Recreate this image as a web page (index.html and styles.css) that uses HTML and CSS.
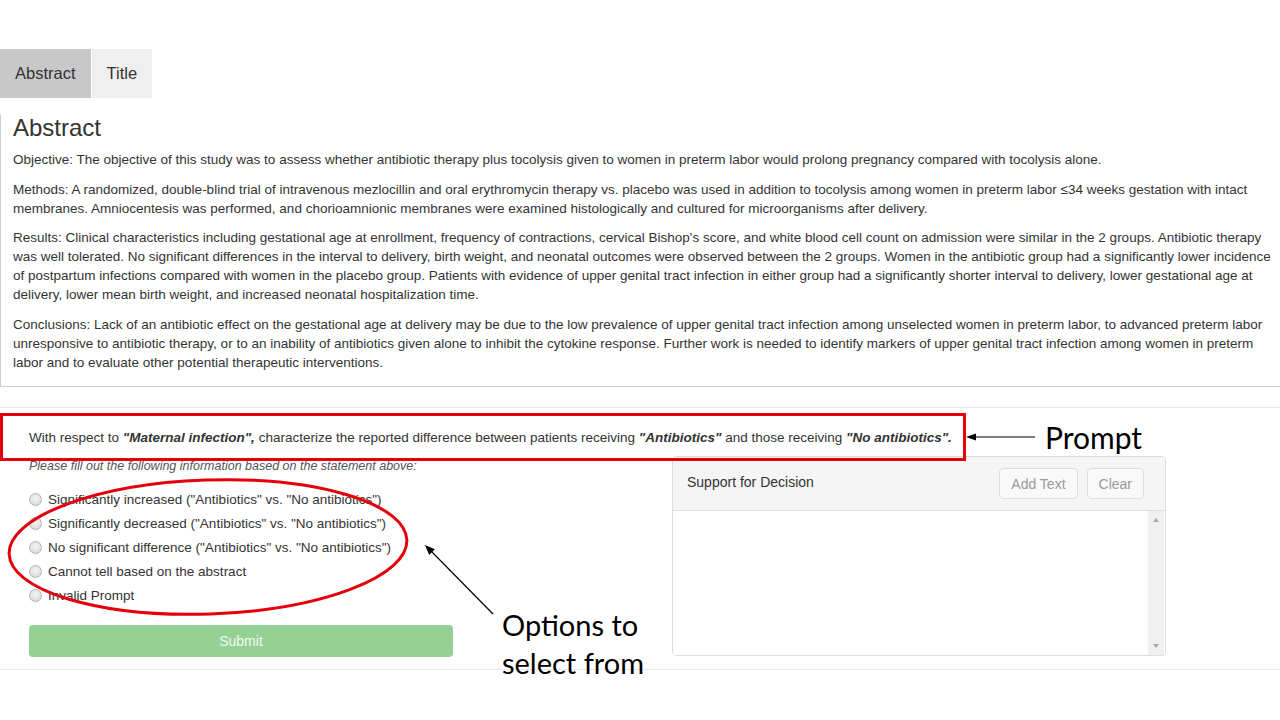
FILE: index.html
```html
<!DOCTYPE html>
<html lang="en">
<head>
<meta charset="utf-8">
<title>Abstract annotation</title>
<link rel="stylesheet" href="styles.css">
</head>
<body>
<div class="page">
  <div class="tabs">
    <div class="tab active">Abstract</div>
    <div class="tab">Title</div>
  </div>
  <div class="abstract-panel">
    <h2 class="abstract-title">Abstract</h2>
    <p class="para">Objective: The objective of this study was to assess whether antibiotic therapy plus tocolysis given to women in preterm labor would prolong pregnancy compared with tocolysis alone.</p>
    <p class="para">Methods: A randomized, double-blind trial of intravenous mezlocillin and oral erythromycin therapy vs. placebo was used in addition to tocolysis among women in preterm labor ≤34 weeks gestation with intact membranes. Amniocentesis was performed, and chorioamnionic membranes were examined histologically and cultured for microorganisms after delivery.</p>
    <p class="para">Results: Clinical characteristics including gestational age at enrollment, frequency of contractions, cervical Bishop's score, and white blood cell count on admission were similar in the 2 groups. Antibiotic therapy was well tolerated. No significant differences in the interval to delivery, birth weight, and neonatal outcomes were observed between the 2 groups. Women in the antibiotic group had a significantly lower incidence of postpartum infections compared with women in the placebo group. Patients with evidence of upper genital tract infection in either group had a significantly shorter interval to delivery, lower gestational age at delivery, lower mean birth weight, and increased neonatal hospitalization time.</p>
    <p class="para last">Conclusions: Lack of an antibiotic effect on the gestational age at delivery may be due to the low prevalence of upper genital tract infection among unselected women in preterm labor, to advanced preterm labor unresponsive to antibiotic therapy, or to an inability of antibiotics given alone to inhibit the cytokine response. Further work is needed to identify markers of upper genital tract infection among women in preterm labor and to evaluate other potential therapeutic interventions.</p>
  </div>

  <div class="task">
    <p class="prompt">With respect to <b><i>"Maternal infection",</i></b> characterize the reported difference between patients receiving <b><i>"Antibiotics"</i></b> and those receiving <b><i>"No antibiotics".</i></b></p>
    <div class="cols">
      <div class="left-col">
        <p class="instructions">Please fill out the following information based on the statement above:</p>
        <div class="options">
          <label class="option"><span class="radio"></span>Significantly increased ("Antibiotics" vs. "No antibiotics")</label>
          <label class="option"><span class="radio"></span>Significantly decreased ("Antibiotics" vs. "No antibiotics")</label>
          <label class="option"><span class="radio"></span>No significant difference ("Antibiotics" vs. "No antibiotics")</label>
          <label class="option"><span class="radio"></span>Cannot tell based on the abstract</label>
          <label class="option"><span class="radio"></span>Invalid Prompt</label>
        </div>
        <div class="submit">Submit</div>
      </div>
      <div class="support">
        <div class="support-head">
          <span class="support-title">Support for Decision</span>
          <div class="support-btns">
            <span class="btn">Add Text</span>
            <span class="btn">Clear</span>
          </div>
        </div>
        <div class="support-body">
          <div class="text-area"></div>
          <div class="scrollbar">
            <span class="arrow up"></span>
            <span class="arrow down"></span>
          </div>
        </div>
      </div>
    </div>
  </div>

  <svg class="annotations" width="1280" height="720" viewBox="0 0 1280 720">
    <rect x="1.5" y="414.5" width="963" height="45" fill="none" stroke="#e3000b" stroke-width="3"/>
    <line x1="1035" y1="437" x2="972" y2="437" stroke="#000" stroke-width="1.2"/>
    <polygon points="966,437 976,433.5 976,440.5" fill="#000"/>
    <ellipse cx="208" cy="547" rx="199" ry="67" transform="rotate(-2 208 547)" fill="none" stroke="#e3000b" stroke-width="3"/>
    <line x1="493" y1="614" x2="430" y2="550" stroke="#000" stroke-width="1.2"/>
    <polygon points="425,545 434.8,549.3 429.2,554.9" fill="#000"/>
  </svg>
  <div class="note note-prompt">Prompt</div>
  <div class="note note-options">Options to<br>select from</div>
</div>
</body>
</html>
```

FILE: styles.css
```css
html, body {
  margin: 0;
  padding: 0;
  background: #fff;
}

.page {
  position: relative;
  width: 1280px;
  height: 720px;
  overflow: hidden;
  padding-top: 49px;
  box-sizing: border-box;
  font-family: "Liberation Sans", Arial, sans-serif;
  color: #333;
}

.tabs {
  display: flex;
  gap: 1px;
  height: 49px;
}

.tab {
  padding: 0 15px;
  line-height: 49px;
  font-size: 16.5px;
  background: #efefef;
  color: #333;
}

.tab.active {
  background: #c8c8c8;
}

.abstract-panel {
  border-left: 1px solid #ccc;
  border-bottom: 1px solid #ccc;
  padding: 0 9px 14px 12px;
}

.abstract-title {
  margin: 17px 0 9px;
  font-size: 24px;
  line-height: 26.4px;
  font-weight: normal;
  color: #333;
}

.para {
  margin: 0 0 10.5px;
  font-size: 13.5px;
  line-height: 19px;
}

.para.last {
  margin-bottom: 0;
}

.task {
  margin-top: 20px;
  border-top: 1px solid #e8e8e8;
  border-bottom: 1px solid #e8e8e8;
  padding: 20.5px 0 12px;
}

.prompt {
  margin: 0 0 9px 29px;
  font-size: 13.5px;
  line-height: 19px;
}

.prompt b {
  font-weight: bold;
}

.cols {
  display: flex;
  align-items: flex-start;
  padding-left: 29px;
  gap: 219px;
}

.left-col {
  width: 424px;
  padding-top: 1px;
}

.instructions {
  margin: 0 0 11.5px;
  font-size: 12.5px;
  line-height: 19px;
  font-style: italic;
  color: #555;
}

.options {
  display: flex;
  flex-direction: column;
}

.option {
  display: flex;
  align-items: center;
  height: 24px;
  font-size: 13.5px;
  color: #333;
}

.radio {
  width: 11px;
  height: 11px;
  border: 1px solid #b5b5b5;
  border-radius: 50%;
  background: radial-gradient(circle at 50% 40%, #f4f4f4 0%, #e2e2e2 60%, #cfcfcf 100%);
  margin: 0 6px 0 0;
  flex: none;
}

.submit {
  margin-top: 17px;
  height: 32px;
  line-height: 32px;
  text-align: center;
  background: #95d095;
  border-radius: 4px;
  color: #f2faf2;
  font-size: 14px;
}

.support {
  width: 494px;
  height: 200px;
  box-sizing: border-box;
  border: 1px solid #ddd;
  border-radius: 4px;
  display: flex;
  flex-direction: column;
  overflow: hidden;
}

.support-head {
  display: flex;
  align-items: center;
  justify-content: space-between;
  height: 53px;
  padding: 0 21px 0 14px;
  background: #f5f5f5;
  border-bottom: 1px solid #ddd;
  flex: none;
}

.support-title {
  font-size: 14px;
  color: #333;
  margin-top: -3px;
}

.support-btns {
  display: flex;
  gap: 9px;
}

.btn {
  height: 31px;
  line-height: 31px;
  padding: 0 11px;
  box-sizing: border-box;
  border: 1px solid #ddd;
  border-radius: 4px;
  background: #f9f9f9;
  color: #9a9a9a;
  font-size: 14px;
}

.support-body {
  flex: 1;
  display: flex;
  background: #fff;
}

.text-area {
  flex: 1;
}

.scrollbar {
  width: 16px;
  margin-right: 1px;
  background: #f0f0f0;
  display: flex;
  flex-direction: column;
  justify-content: space-between;
  align-items: center;
  padding: 7px 0 7px;
}

.arrow {
  width: 0;
  height: 0;
  border-left: 3.5px solid transparent;
  border-right: 3.5px solid transparent;
}

.arrow.up {
  border-bottom: 4px solid #a8a8a8;
}

.arrow.down {
  border-top: 4px solid #a8a8a8;
}

.annotations {
  position: absolute;
  left: 0;
  top: 0;
  pointer-events: none;
}

.note {
  position: absolute;
  font-family: Lato, "Open Sans", sans-serif;
  font-size: 29px;
  color: #000;
  line-height: 38px;
}

.note-prompt {
  left: 1045px;
  top: 418px;
  font-size: 30px;
}

.note-options {
  left: 502px;
  top: 606px;
}
```
